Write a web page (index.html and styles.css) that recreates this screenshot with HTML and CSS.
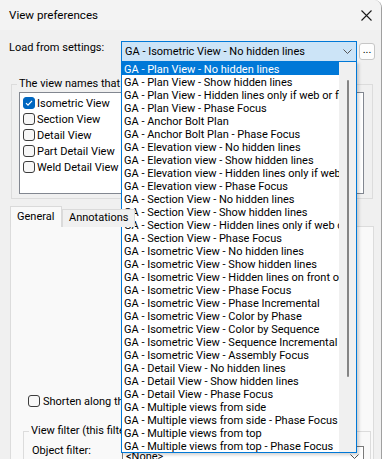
FILE: index.html
```html
<!DOCTYPE html>
<html lang="en">
<head>
  <meta charset="UTF-8" />
  <title>View preferences</title>
  <link rel="stylesheet" href="styles.css">
</head>
<body>
  <div class="window">
    <div class="titlebar">
      <span class="title">View preferences</span>
      <svg class="close" width="11" height="11" viewBox="0 0 11 11">
        <path d="M0.5 0.5 L10.5 10.5 M10.5 0.5 L0.5 10.5" stroke="#1a1a1a" stroke-width="1.1" fill="none"/>
      </svg>
    </div>

    <div class="dialog">
      <div class="load-row">
        <span class="label">Load from settings:</span>
        <div class="combo active">
          <span>GA - Isometric View - No hidden lines</span>
          <svg class="chevron" width="9" height="5" viewBox="0 0 9 5">
            <path d="M0.5 0.5 L4.5 4.5 L8.5 0.5" stroke="#555" stroke-width="1" fill="none"/>
          </svg>
        </div>
        <button class="dots">...</button>
      </div>

      <fieldset class="group names">
        <legend>The view names that will be created</legend>
        <div class="listbox">
          <div class="check"><span class="box checked"><svg width="12" height="12" viewBox="0 0 12 12"><path d="M3 6.2 L5 8.2 L9 3.8" stroke="#fff" stroke-width="1.2" fill="none"/></svg></span>Isometric View</div>
          <div class="check"><span class="box"></span>Section View</div>
          <div class="check"><span class="box"></span>Detail View</div>
          <div class="check"><span class="box"></span>Part Detail View</div>
          <div class="check"><span class="box"></span>Weld Detail View</div>
        </div>
      </fieldset>

      <div class="tabs">
        <div class="tab selected">General</div>
        <div class="tab">Annotations</div>
      </div>
      <div class="tab-panel">
        <div class="check shorten"><span class="box"></span>Shorten along the view</div>
        <fieldset class="group filter">
          <legend>View filter (this filter</legend>
          <div class="filter-row">
            <span class="filter-label">Object filter:</span>
            <div class="combo plain">
              <span>&lt;None&gt;</span>
              <svg class="chevron" width="9" height="5" viewBox="0 0 9 5">
                <path d="M0.5 0.5 L4.5 4.5 L8.5 0.5" stroke="#555" stroke-width="1" fill="none"/>
              </svg>
            </div>
          </div>
        </fieldset>
      </div>
    </div>

    <!-- open list of the settings combo -->
    <div class="dropdown">
      <ul class="options">
        <li class="hot">GA - Plan View - No hidden lines</li>
        <li>GA - Plan View - Show hidden lines</li>
        <li>GA - Plan View - Hidden lines only if web or flange</li>
        <li>GA - Plan View - Phase Focus</li>
        <li>GA - Anchor Bolt Plan</li>
        <li>GA - Anchor Bolt Plan - Phase Focus</li>
        <li>GA - Elevation view - No hidden lines</li>
        <li>GA - Elevation view - Show hidden lines</li>
        <li>GA - Elevation view - Hidden lines only if web or flange</li>
        <li>GA - Elevation view - Phase Focus</li>
        <li>GA - Section View - No hidden lines</li>
        <li>GA - Section View - Show hidden lines</li>
        <li>GA - Section View - Hidden lines only if web or flange</li>
        <li>GA - Section View - Phase Focus</li>
        <li>GA - Isometric View - No hidden lines</li>
        <li>GA - Isometric View - Show hidden lines</li>
        <li>GA - Isometric View - Hidden lines on front of</li>
        <li>GA - Isometric View - Phase Focus</li>
        <li>GA - Isometric View - Phase Incremental</li>
        <li>GA - Isometric View - Color by Phase</li>
        <li>GA - Isometric View - Color by Sequence</li>
        <li>GA - Isometric View - Sequence Incremental</li>
        <li>GA - Isometric View - Assembly Focus</li>
        <li>GA - Detail View - No hidden lines</li>
        <li>GA - Detail View - Show hidden lines</li>
        <li>GA - Detail View - Phase Focus</li>
        <li>GA - Multiple views from side</li>
        <li>GA - Multiple views from side - Phase Focus</li>
        <li>GA - Multiple views from top</li>
        <li>GA - Multiple views from top - Phase Focus</li>
      </ul>
      <div class="scrollbar"><div class="thumb"></div></div>
    </div>
  </div>
</body>
</html>
```

FILE: styles.css
```css
* {
  box-sizing: border-box;
}

body {
  margin: 0;
  background-color: #fff;
  font-family: Roboto, "Liberation Sans", sans-serif;
  font-size: 11px;
  color: #000;
}

.window {
  position: relative;
  width: 382px;
  height: 459px;
  background-color: #f0f0f0;
  border-right: 1px solid #a0a0a0;
  border-top-right-radius: 8px;
  overflow: hidden;
}

.titlebar {
  height: 30px;
  background-color: #f3f3f3;
  display: flex;
  align-items: center;
  justify-content: space-between;
  padding: 0 9px;
}

.title {
  font-size: 11.6px;
}

.close {
  display: block;
  margin-top: 1px;
}

.dialog {
  padding-top: 11px;
}

/* Load from settings */
.load-row {
  display: flex;
  align-items: flex-start;
  height: 21px;
}

.label {
  width: 112px;
  margin-left: 9px;
  line-height: 14px;
}

.combo {
  display: flex;
  align-items: center;
  height: 21px;
  padding: 0 4px 0 3px;
  white-space: nowrap;
}

.combo .chevron {
  margin-left: auto;
}

.combo.active {
  width: 236px;
  background-color: #cce4f7;
  border: 1px solid #0078d7;
}

.dots {
  width: 16px;
  height: 17px;
  margin: 2px 0 0 2px;
  padding: 0 0 3px;
  background-color: #fdfdfd;
  border: 1px solid #c6c6c6;
  border-radius: 3px;
  font: inherit;
  font-size: 11px;
  line-height: 12px;
}

/* group boxes */
.group {
  margin: 0;
  border: 1px solid #dcdcdc;
  min-width: 0;
}

.group legend {
  padding: 0 2px;
  margin-left: -2px;
  line-height: 14px;
  white-space: nowrap;
}

.names {
  width: 362px;
  margin: 15px 0 0 11px;
  padding: 1px 8px 4px 7px;
}

.listbox {
  height: 102px;
  background-color: #fff;
  border: 1px solid #828790;
  padding: 2px 3px;
}

.check {
  display: flex;
  align-items: center;
  gap: 2px;
  height: 16px;
  white-space: nowrap;
}

.box {
  width: 12px;
  height: 12px;
  border: 1px solid #3c3c3c;
  border-radius: 3px;
  background-color: #f7f7f7;
  flex: none;
}

.box.checked {
  background-color: #0067c0;
  border-color: #0067c0;
}

.box svg {
  display: block;
  margin: -1px;
}

/* tabs */
.tabs {
  display: flex;
  align-items: flex-end;
  height: 21px;
  margin: 7px 0 -1px 10px;
  position: relative;
  z-index: 1;
}

.tab {
  height: 18px;
  line-height: 16px;
  padding: 0 6px;
  border: 1px solid #dadada;
  border-bottom: none;
  background-color: #f0f0f0;
  white-space: nowrap;
}

.tab.selected {
  height: 21px;
  line-height: 19px;
  width: 52px;
  background-color: #f9f9f9;
}

.tab-panel {
  width: 364px;
  height: 240px;
  margin-left: 10px;
  padding: 166px 0 0 17px;
  background-color: #f9f9f9;
  border: 1px solid #dcdcdc;
}

.shorten {
  gap: 3px;
}

.filter {
  width: 348px;
  margin: 15px 0 0 -5px;
  padding: 6px 6px 0 8px;
}

.filter legend {
  margin-left: -3px;
}

.filter-row {
  display: flex;
  align-items: flex-start;
}

.filter-label {
  width: 90px;
  line-height: 14px;
}

.combo.plain {
  width: 242px;
  margin-top: 2px;
  background-color: #fff;
  border: 1px solid #7a7a7a;
}

/* open drop-down list */
.dropdown {
  position: absolute;
  left: 121px;
  top: 61px;
  width: 236px;
  height: 392px;
  display: flex;
  background-color: #fff;
  border: 1px solid #0078d7;
  box-shadow: 2px 2px 3px rgba(0, 0, 0, 0.18);
}

.options {
  list-style: none;
  margin: 0;
  padding: 0;
  width: 217px;
  overflow: hidden;
}

.options li {
  height: 13px;
  line-height: 13px;
  padding: 1px 0 0 2px;
  white-space: nowrap;
}

.options li.hot {
  background-color: #0078d7;
  color: #fff;
}

.scrollbar {
  width: 17px;
  background-color: #f0f0f0;
  padding: 18px 0 0 8px;
}

.thumb {
  width: 2px;
  height: 297px;
  border-radius: 1px;
  background-color: #858585;
}
```
